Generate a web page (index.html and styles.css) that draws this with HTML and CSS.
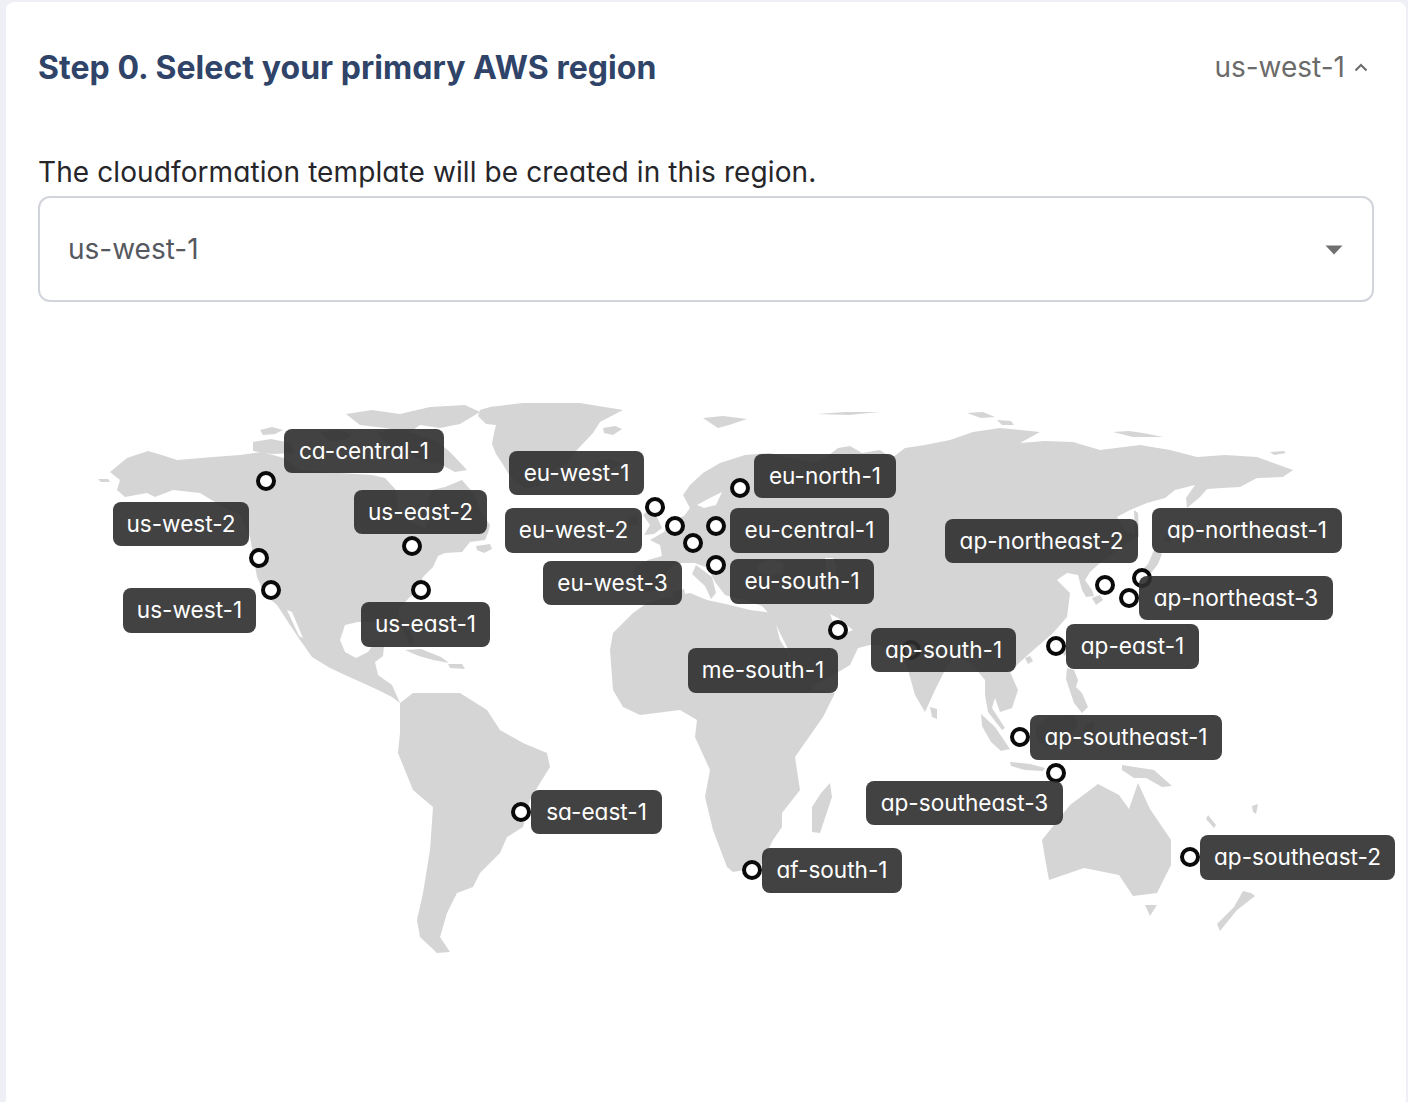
FILE: index.html
```html
<!DOCTYPE html>
<html lang="en">
<head>
<meta charset="utf-8">
<title>Select region</title>
<link rel="stylesheet" href="styles.css">
</head>
<body>
<main class="card">
  <header class="card-head">
    <h2 class="title">Step 0. Select your primary AWS region</h2>
    <div class="current">
      <span>us-west-1</span>
      <svg class="chevron" viewBox="0 0 14 9" width="14" height="9"><path d="M1.5 7.5 7 2l5.5 5.5" fill="none" stroke="#6b6b6b" stroke-width="2"/></svg>
    </div>
  </header>
  <p class="label">The cloudformation template will be created in this region.</p>
  <div class="select">
    <span>us-west-1</span>
    <svg class="caret" viewBox="0 0 18 10" width="18" height="10"><path d="M0.5 0.5h17L9 9.5z" fill="#707070"/></svg>
  </div>
  <section class="map">
    <svg class="land" viewBox="6 302 1400 800" width="1400" height="800">
      <g fill="#d5d5d5">
        <!-- North America -->
        <path d="M110 472L127 458 148 451 165 456 177 460 213 457 240 455 262 452 284 458 300 470 340 473 372 475 385 478 396 490 398 510 412 522 425 528 432 515 428 500 432 490 445 487 462 480 475 495 480 510 490 525 488 533 485 540 470 542 462 552 445 553 438 556 433 567 423 577 418 590 410 597 400 607 398 617 410 630 414 644 409 645 402 628 393 620 375 622 358 622 345 625 340 640 345 652 356 658 368 652 373 645 384 646 383 656 375 662 378 675 392 685 400 703 392 697 378 690 365 684 345 675 330 668 312 657 300 640 290 625 277 605 265 595 257 577 254 560 250 537 240 515 223 507 200 493 173 490 155 497 147 493 125 497 117 490 120 480z"/>
        <path d="M98 479l10 0 2 3-9 0z"/>
        <path d="M346 414l26-4 28 4 30-7 35-2 15 7-20 12-20 4-20-3-10 7-25-4-25-3z"/>
        <path d="M377 433l18-4 20 5 22 7 14 12 16 17-12 2-15-8-14-2-17-8-16-6-12-9z"/>
        <path d="M260 430l12-3 11 3-8 4-12 1z"/>
        <path d="M253 442l18-3 20 4 3 10-22 1-19-3z"/>
        <path d="M320 432l18-2 14 4-6 6-18 1z"/>
        <path d="M405 650l16-1 20 8 8 6-16-3-14-4z"/>
        <path d="M448 664l14 0 3 5-15-1z"/>
        <path d="M476 546l14-2 2 5-8 4-7-3z"/>
        <!-- Greenland -->
        <path d="M490 407L523 403 580 403 623 410 600 422 593 433 577 450 567 463 553 471 539 486 526 489 517 483 508 473 502 463 496 454 492 444 494 433 496 425 486 424 478 416 480 410z"/>
        <path d="M603 428l12-2 7 3-9 6-9-2z"/>
        <!-- South America -->
        <path d="M400 703L413 693 430 693 460 693 487 710 500 730 523 743 547 753 550 767 540 783 530 800 523 827 507 837 500 853 480 873 473 887 457 893 447 913 440 937 450 952 437 953 420 937 417 920 423 893 430 850 433 807 413 790 398 753 400 733z"/>
        <!-- Africa -->
        <path d="M613 690L610 650 613 633 633 613 647 603 665 598 690 593 707 600 730 605 750 610 773 613 780 640 795 665 805 680 815 690 835 693 823 717 795 757 800 790 782 813 782 827 773 840 760 867 733 872 727 867 713 830 705 797 710 770 695 737 697 720 680 710 640 715 623 707z"/>
        <path d="M830 783l2 14-12 36-8-1 0-25 9-14z"/>
        <!-- Eurasia -->
        <path d="M632 588L634 568 648 560 662 556 660 545 650 540 664 532 672 520 684 516 690 508 683 495 690 485 703 473 720 463 745 455 770 453 790 458 812 462 825 458 838 448 850 446 862 453 880 450 892 458 905 448 925 445 950 440 973 432 1000 428 1040 432 1020 443 1045 441 1073 442 1100 450 1140 445 1170 450 1197 457 1225 455 1257 457 1293 470 1283 477 1257 478 1240 487 1222 488 1207 489 1200 497 1187 508 1186 498 1195 485 1175 490 1165 498 1147 503 1130 510 1117 517 1125 530 1137 537 1125 545 1100 563 1090 572 1085 580 1092 590 1094 596 1086 597 1082 590 1078 575 1067 573 1057 580 1070 593 1067 617 1053 633 1030 653 1020 662 1010 672 1018 690 1012 708 1000 712 995 698 992 708 1005 728 1002 730 988 712 985 695 985 680 975 668 965 660 955 655 945 670 935 690 925 712 915 695 908 670 903 655 890 655 880 645 870 645 858 648 850 665 825 680 805 690 793 665 787 647 772 617 762 606 745 600 735 598 725 595 715 582 708 568 695 563 680 563 672 566 664 575 660 590 640 593z"/>
        <path d="M696 565l16 12 4 16-5 6-6-13-13-12z"/>
        <path d="M672 592l12-3 2 9-10 2z"/>
        <!-- UK, Iceland, Arctic -->
        <path d="M643 515l10-10 3 10 6 13-8 6-10 1 6-10z"/>
        <path d="M628 517l9-2 2 9-10 2z"/>
        <path d="M595 462l16-3 10 5-12 6-13-3z"/>
        <path d="M703 418l20-2 24 3-18 6-11 3z"/>
        <path d="M817 414l28-2 34 0-30 3z"/>
        <path d="M967 413l16-1 12 5-14 1z"/>
        <path d="M997 420l14 1 3 4-12 0z"/>
        <path d="M1113 432l16-1 14 2 20 4-30 0z"/>
        <path d="M1270 452l14-1 2 2-12 2z"/>
        <!-- Japan, Asia islands -->
        <path d="M1138 574l10-10 6-14 8 4-4 10-10 13-6 9z"/>
        <path d="M1125 600l10-6 6 1-8 8-6 1z"/>
        <path d="M1162 540l10-9 3 3-6 9z"/>
        <path d="M1134 510l4 3 1 24-4-1z"/>
        <path d="M1092 598l8-3 3 5-7 5z"/>
        <path d="M1062 650l5-5 1 8-4 3z"/>
        <path d="M1025 658l5-2 3 5-5 3z"/>
        <path d="M930 707l7 2 0 10-5-2z"/>
        <!-- Philippines, Indonesia, PNG -->
        <path d="M1067 668l7 2 4 10-2 7 6 6 6 14-6 6-8-10-4-12-4-12z"/>
        <path d="M981 714l14 13 15 22-9 2-10-9-9-16z"/>
        <path d="M1010 762l20 2 15 4-2 3-18-1-14-4z"/>
        <path d="M1035 728l14-12 25-1 4 8-10 20-22 5-9-9z"/>
        <path d="M1085 725l8-4 3 20-8 3-5-10z"/>
        <path d="M1122 765l32 5 10 9 8 7-10 1-16-9-12 0-12-8z"/>
        <!-- Australia, NZ -->
        <path d="M1042 840L1070 805 1098 784 1119 795 1129 809 1138 783 1150 809 1171 840 1171 865 1157 893 1133 896 1119 875 1084 868 1049 880 1045 858z"/>
        <path d="M1145 905l12 0-7 11z"/>
        <path d="M1243 891l8 2 4 3-18 14-17 21-3-7 17-17z"/>
        <path d="M1208 815l8 10-2 3-8-9z"/>
        <path d="M1252 806l6-2-2 10-3-2z"/>
      </g>
      <g fill="#fff">
        <path d="M287 610l5 2 11 26-4-2z"/>
        <path d="M697 505l13-7 12-6-6 13-12 3z"/>
        <path d="M757 564l14-4 12 3 0 10-14 3-10-4z"/>
        <path d="M825 558l8 0 4 10-2 9-8-3z"/>
        <path d="M830 614l8 4 15 12-5 2-14-8z"/>
      </g>
    </svg>
    <span class="pin" style="left:260px;top:179px"></span>
    <span class="pin" style="left:253px;top:256px"></span>
    <span class="pin" style="left:265px;top:288px"></span>
    <span class="pin" style="left:406px;top:244px"></span>
    <span class="pin" style="left:415px;top:288px"></span>
    <span class="pin" style="left:649px;top:205px"></span>
    <span class="pin" style="left:669px;top:224px"></span>
    <span class="pin" style="left:687px;top:241px"></span>
    <span class="pin" style="left:710px;top:224px"></span>
    <span class="pin" style="left:710px;top:263px"></span>
    <span class="pin" style="left:734px;top:186px"></span>
    <span class="pin" style="left:832px;top:328px"></span>
    <span class="pin" style="left:905px;top:348px"></span>
    <span class="pin" style="left:1099px;top:283px"></span>
    <span class="pin" style="left:1136px;top:276px"></span>
    <span class="pin" style="left:1123px;top:296px"></span>
    <span class="pin" style="left:1050px;top:344px"></span>
    <span class="pin" style="left:1014px;top:435px"></span>
    <span class="pin" style="left:1050px;top:471px"></span>
    <span class="pin" style="left:1184px;top:555px"></span>
    <span class="pin" style="left:515px;top:510px"></span>
    <span class="pin" style="left:746px;top:568px"></span>

    <span class="tag" style="left:278px;top:127px;width:160px">ca-central-1</span>
    <span class="tag" style="left:107px;top:200px;width:136px">us-west-2</span>
    <span class="tag tall" style="left:117px;top:286px;width:133px">us-west-1</span>
    <span class="tag" style="left:348px;top:188px;width:133px">us-east-2</span>
    <span class="tag tall" style="left:355px;top:300px;width:129px">us-east-1</span>
    <span class="tag" style="left:503px;top:149px;width:135px">eu-west-1</span>
    <span class="tag tall" style="left:499px;top:206px;width:137px">eu-west-2</span>
    <span class="tag" style="left:537px;top:259px;width:139px">eu-west-3</span>
    <span class="tag" style="left:748px;top:152px;width:142px">eu-north-1</span>
    <span class="tag tall" style="left:724px;top:206px;width:159px">eu-central-1</span>
    <span class="tag tall" style="left:724px;top:257px;width:144px">eu-south-1</span>
    <span class="tag tall" style="left:682px;top:346px;width:150px">me-south-1</span>
    <span class="tag" style="left:865px;top:326px;width:145px">ap-south-1</span>
    <span class="tag" style="left:939px;top:217px;width:193px">ap-northeast-2</span>
    <span class="tag tall" style="left:1146px;top:206px;width:190px">ap-northeast-1</span>
    <span class="tag" style="left:1133px;top:274px;width:194px">ap-northeast-3</span>
    <span class="tag tall" style="left:1060px;top:322px;width:133px">ap-east-1</span>
    <span class="tag tall" style="left:1024px;top:413px;width:192px">ap-southeast-1</span>
    <span class="tag" style="left:860px;top:479px;width:197px">ap-southeast-3</span>
    <span class="tag tall" style="left:1194px;top:533px;width:195px">ap-southeast-2</span>
    <span class="tag" style="left:525px;top:488px;width:131px">sa-east-1</span>
    <span class="tag tall" style="left:756px;top:546px;width:140px">af-south-1</span>
  </section>
</main>
</body>
</html>
```

FILE: styles.css
```css
* { box-sizing: border-box; }
html, body { margin: 0; height: 100%; }
body {
  background: #eef0f5;
  padding: 2px 2px 0 6px;
  overflow: hidden;
  font-family: Inter, "Liberation Sans", sans-serif;
  font-feature-settings: "cv11" 1;
}
.card {
  background: #fff;
  border-radius: 8px 8px 0 0;
  height: 1100px;
  padding: 0 32px;
}
.card-head {
  display: flex;
  justify-content: space-between;
  align-items: center;
  height: 130px;
  margin-bottom: 2px;
  padding-right: 6px;
}
.title {
  margin: 0;
  font-size: 32px;
  font-weight: 700;
  letter-spacing: 0.05px;
  color: #2f4468;
}
.current {
  display: flex;
  align-items: center;
  gap: 9px;
  font-size: 28px;
  color: #6b6b6b;
}
.label {
  margin: 0 0 6px;
  height: 56px;
  padding-top: 19px;
  font-size: 28px;
  letter-spacing: 0.1px;
  line-height: 38px;
  color: #26262a;
}
.select {
  display: flex;
  justify-content: space-between;
  align-items: center;
  height: 106px;
  padding: 0 28px;
  border: 2px solid #d1d5db;
  border-radius: 12px;
  font-size: 28px;
  color: #55595f;
}
.caret { margin-top: 1px; margin-right: 1px; }
.map {
  position: relative;
  width: 1400px;
  height: 798px;
  margin-left: -32px;
}
.land {
  position: absolute;
  left: 0;
  top: 0;
  display: block;
}
.pin {
  position: absolute;
  width: 20px;
  height: 20px;
  margin: -10px 0 0 -10px;
  border: 4px solid #0a0a0a;
  border-radius: 50%;
  background: #fff;
}
.tag {
  position: absolute;
  height: 44px;
  border-radius: 8px;
  background: rgba(46, 46, 46, 0.9);
  color: #fff;
  font-size: 22.6px;
  line-height: 44px;
  text-align: center;
  white-space: nowrap;
}
.tall { height: 45px; }
```
